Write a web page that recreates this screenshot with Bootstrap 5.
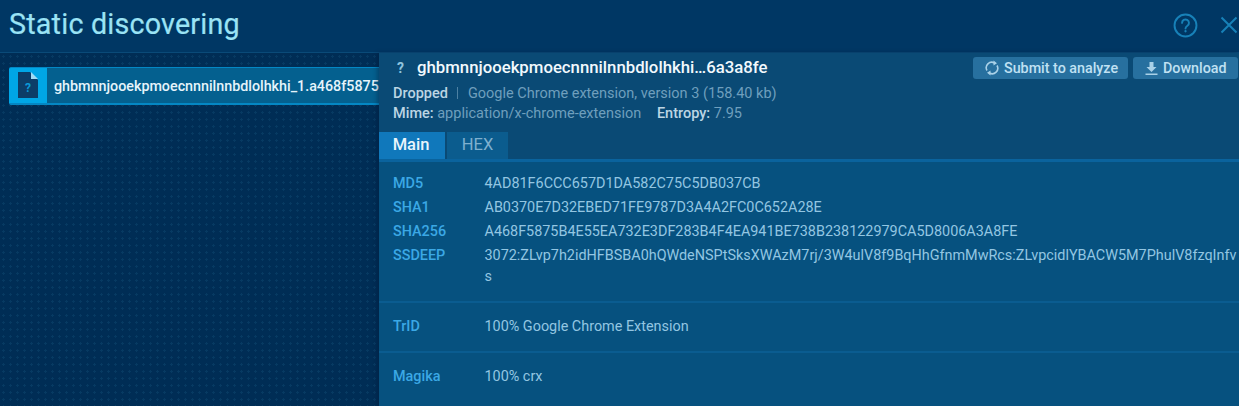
<!DOCTYPE html>
<html lang="en">
<head>
<meta charset="utf-8">
<title>Static discovering</title>
<link rel="stylesheet" href="https://cdn.jsdelivr.net/npm/bootstrap@5.3.0/dist/css/bootstrap.min.css">
<style>
html,body{height:100%;overflow:hidden}
body{background:#003764;font-family:Roboto,"Liberation Sans",sans-serif;color:#fff}
.shell{height:406px}
.topbar{height:53px;background:#003764;border-bottom:1px solid #0a4a78;padding:0 1px 0 9px}
.topbar h1{font-size:28.7px;font-weight:400;color:#9ae3f5;margin:0 0 4px;letter-spacing:.2px;-webkit-text-stroke:.2px #9ae3f5}
.hd-icons{gap:22px;margin-bottom:2px}
.panes{height:353px}
.leftpane{width:379px;background-color:#002d55;background-image:radial-gradient(circle,#073a62 1px,transparent 1.2px);background-size:7px 7px;padding-top:14px;padding-left:9px;flex:none;overflow:hidden}
.filerow{height:38px;background:#04608f;border:solid #0487c4;border-width:1px 0 2px;border-radius:2px 0 0 2px;overflow:hidden}
.fileicon{width:38px;height:38px;margin-top:-1px;background:#00a6e6;flex:none}
.fname{font-size:14.3px;font-weight:500;padding-left:7px;white-space:nowrap;color:#e6f4fb;margin-top:2px}
.rightpane{background:#06517f;box-shadow:-2px 0 4px rgba(0,20,50,.35);min-width:0;position:relative}
.infohead{height:79px;background:#0a4a75;padding:0 1px 0 14px}
.titleline{height:31px;padding-bottom:1px}
.qmark{width:24px;font-size:14px;font-weight:700;color:#8fc4de;padding-left:4px}
.ftitle{font-size:16.75px;font-weight:500;color:#f2f9fd}
.actbtn{background:#27709f;border:0;border-radius:3px;color:#c0e1f3;height:22px;font-size:14.3px;font-weight:500;padding:0 0 0 11px;line-height:22px;gap:4px}
.b1{width:155px}.b2{width:105px}
.btnwrap{gap:5px}
.meta{font-size:14.5px;line-height:20px;color:#6f9fbd}
.meta b{font-weight:500;color:#bcd5e4}
.sep{display:inline-block;width:1px;height:12px;background:#4d81a3;margin:0 10px 0 9px;vertical-align:-1px}
.gapl{margin-left:12px}
.tabsline{height:30px;background:#0a4a75;border-bottom:3px solid #0a639d;gap:2px}
.tabx{height:27px;line-height:26px;font-size:16.5px;text-align:center;font-weight:500}
.tabon{width:66px;background:#1078bb;color:#e9f5fc;padding-right:2px}
.taboff{width:61px;background:#0b5c8e;color:#7fb0cf;font-weight:400}
.datablk{padding:9px 1px 0 14px;border-bottom:2px solid #0a5c90}
.drow{font-size:14.4px;display:flex}
.dkey{width:91.5px;flex:none;color:#3ba8e5;font-weight:500;line-height:21px;padding:1.5px 0}
.dval{color:#93c6e2;word-break:break-all;min-width:0;flex:1;line-height:21px;padding:1.5px 0}
.hashes{height:141px}
.single{height:50px;padding-top:11px}
.lastblk{border:0}
</style>
</head>
<body>
<div class="shell d-flex flex-column">
  <header class="topbar d-flex justify-content-between align-items-center">
    <h1>Static discovering</h1>
    <div class="hd-icons d-flex align-items-center">
      <svg width="25" height="25" viewBox="0 0 26 26" fill="none" aria-hidden="true"><circle cx="13" cy="13" r="11.4" stroke="#1781b8" stroke-width="2"/><path d="M9.400 10.300a3.600 3.600 0 1 1 5.600 3c-1.400.9-2 1.500-2 2.900" stroke="#1781b8" stroke-width="2" stroke-linecap="round"/><circle cx="13" cy="19" r="1.200" fill="#1781b8"/></svg>
      <svg width="18" height="18" viewBox="0 0 18 18" fill="none" aria-hidden="true"><path d="M1.500 1.500l15 15M16.500 1.500l-15 15" stroke="#1781b8" stroke-width="2"/></svg>
    </div>
  </header>
  <div class="panes d-flex">
    <aside class="leftpane">
      <div class="filerow d-flex align-items-center">
        <div class="fileicon d-flex align-items-center justify-content-center">
          <svg width="22" height="28" viewBox="0 0 22 28" aria-hidden="true"><path d="M1 1h12l8 8v18H1z" fill="#0c3d68"/><path d="M14 1l7 7h-7z" fill="#9fdcf5"/><text x="11" y="21" text-anchor="middle" font-family="Roboto,sans-serif" font-size="12" font-weight="700" fill="#0a9ad8">?</text></svg>
        </div>
        <div class="fname">ghbmnnjooekpmoecnnnilnnbdlolhkhi_1.a468f5875</div>
      </div>
    </aside>
    <main class="rightpane flex-grow-1">
      <div class="infohead">
        <div class="titleline d-flex justify-content-between align-items-center">
          <div class="d-flex align-items-center"><span class="qmark">?</span><span class="ftitle">ghbmnnjooekpmoecnnnilnnbdlolhkhi…6a3a8fe</span></div>
          <div class="btnwrap d-flex">
            <button type="button" class="actbtn b1 d-flex align-items-center">
              <svg width="16" height="16" viewBox="0 0 16 16" fill="none" aria-hidden="true"><path d="M3 10.500A5.500 5.500 0 0 1 10.500 3M13 5.500A5.500 5.500 0 0 1 5.500 13" stroke="#a9d1e8" stroke-width="1.600"/><path d="M9.500 0.500l3.500 2.700-3.500 2.300zM6.500 15.500L3 12.800l3.500-2.300z" fill="#a9d1e8"/></svg>
              Submit to analyze
            </button>
            <button type="button" class="actbtn b2 d-flex align-items-center">
              <svg width="15" height="15" viewBox="0 0 15 15" aria-hidden="true"><path d="M5.500 1h4v5h3l-5 5-5-5h3zM1.500 12.500h12V14h-12z" fill="#a9d1e8"/></svg>
              Download
            </button>
          </div>
        </div>
        <div class="meta"><b>Dropped</b><span class="sep"></span>Google Chrome extension, version 3 (158.40 kb)</div>
        <div class="meta"><b>Mime:</b> application/x-chrome-extension <span class="gapl"><b>Entropy:</b> 7.95</span></div>
      </div>
      <div class="tabsline d-flex">
        <div class="tabx tabon">Main</div>
        <div class="tabx taboff">HEX</div>
      </div>
      <section class="datablk hashes">
        <div class="drow"><div class="dkey">MD5</div><div class="dval">4AD81F6CCC657D1DA582C75C5DB037CB</div></div>
        <div class="drow"><div class="dkey">SHA1</div><div class="dval">AB0370E7D32EBED71FE9787D3A4A2FC0C652A28E</div></div>
        <div class="drow"><div class="dkey">SHA256</div><div class="dval">A468F5875B4E55EA732E3DF283B4F4EA941BE738B238122979CA5D8006A3A8FE</div></div>
        <div class="drow"><div class="dkey">SSDEEP</div><div class="dval">3072:ZLvp7h2idHFBSBA0hQWdeNSPtSksXWAzM7rj/3W4ulV8f9BqHhGfnmMwRcs:ZLvpcidlYBACW5M7PhulV8fzqInfvs</div></div>
      </section>
      <section class="datablk single"><div class="drow"><div class="dkey">TrID</div><div class="dval">100% Google Chrome Extension</div></div></section>
      <section class="datablk single lastblk"><div class="drow"><div class="dkey">Magika</div><div class="dval">100% crx</div></div></section>
    </main>
  </div>
</div>
<script src="https://cdn.jsdelivr.net/npm/bootstrap@5.3.0/dist/js/bootstrap.bundle.min.js"></script>
</body>
</html>
